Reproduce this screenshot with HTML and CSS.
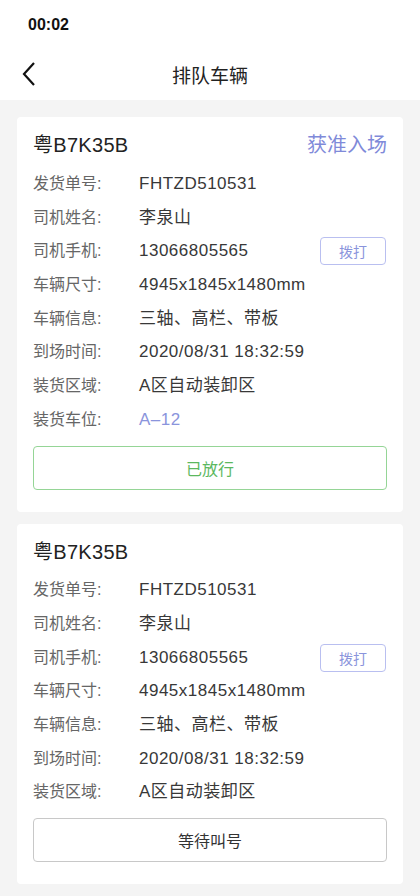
FILE: index.html
```html
<!DOCTYPE html>
<html lang="zh-CN">
  <head>
    <meta charset="UTF-8" />
    <meta name="viewport" content="width=device-width, initial-scale=1.0" />
    <title>排队车辆</title>
    <link rel="stylesheet" href="styles.css">
  </head>
  <body>
    <div class="wrapper">
      <div class="status-bar"><span class="time">00:02</span></div>
      <div class="nav-bar">
        <span class="back">
          <svg width="16" height="26" viewBox="0 0 16 26">
            <polyline points="13,2 3,13 13,24" fill="none" stroke="#111" stroke-width="2.2" />
          </svg>
        </span>
        <h1 class="title">排队车辆</h1>
      </div>

      <div class="list">
        <div class="card">
          <div class="card-head">
            <span class="plate">粤B7K35B</span>
            <span class="state">获准入场</span>
          </div>
          <div class="row"><span class="label">发货单号:</span><span class="value">FHTZD510531</span></div>
          <div class="row"><span class="label">司机姓名:</span><span class="value">李泉山</span></div>
          <div class="row">
            <span class="label">司机手机:</span><span class="value">13066805565</span>
            <button class="call">拨打</button>
          </div>
          <div class="row"><span class="label">车辆尺寸:</span><span class="value">4945x1845x1480mm</span></div>
          <div class="row"><span class="label">车辆信息:</span><span class="value">三轴、高栏、带板</span></div>
          <div class="row"><span class="label">到场时间:</span><span class="value">2020/08/31 18:32:59</span></div>
          <div class="row"><span class="label">装货区域:</span><span class="value">A区自动装卸区</span></div>
          <div class="row"><span class="label">装货车位:</span><span class="value value-link">A–12</span></div>
          <button class="action action-done">已放行</button>
        </div>

        <div class="card">
          <div class="card-head">
            <span class="plate">粤B7K35B</span>
          </div>
          <div class="row"><span class="label">发货单号:</span><span class="value">FHTZD510531</span></div>
          <div class="row"><span class="label">司机姓名:</span><span class="value">李泉山</span></div>
          <div class="row">
            <span class="label">司机手机:</span><span class="value">13066805565</span>
            <button class="call">拨打</button>
          </div>
          <div class="row"><span class="label">车辆尺寸:</span><span class="value">4945x1845x1480mm</span></div>
          <div class="row"><span class="label">车辆信息:</span><span class="value">三轴、高栏、带板</span></div>
          <div class="row"><span class="label">到场时间:</span><span class="value">2020/08/31 18:32:59</span></div>
          <div class="row"><span class="label">装货区域:</span><span class="value">A区自动装卸区</span></div>
          <button class="action action-wait">等待叫号</button>
        </div>
      </div>
    </div>
  </body>
</html>
```

FILE: styles.css
```css
* {
  margin: 0;
  padding: 0;
  box-sizing: border-box;
}
body {
  background-color: #f4f4f4;
}
.wrapper {
  display: flex;
  flex-direction: column;
  width: 420px;
  min-height: 896px;
  background-color: #f4f4f4;
  font-family: "Liberation Sans", "Noto Sans CJK SC", sans-serif;
  color: #333;
}
.status-bar {
  display: flex;
  align-items: center;
  height: 50px;
  padding-left: 28px;
  background-color: #fff;
}
.time {
  font-size: 16px;
  font-weight: bold;
  color: #111;
  line-height: 20px;
}
.nav-bar {
  position: relative;
  display: flex;
  align-items: center;
  justify-content: center;
  height: 50px;
  background-color: #fff;
}
.back {
  position: absolute;
  left: 21px;
  top: 11px;
  display: flex;
}
.title {
  font-size: 19px;
  font-weight: normal;
  color: #222;
  line-height: 26px;
  font-family: "Noto Sans CJK SC", sans-serif;
}
.list {
  display: flex;
  flex-direction: column;
  gap: 12px;
  padding: 17px 17px 13px;
}
.card {
  display: flex;
  flex-direction: column;
  background-color: #fff;
  border-radius: 4px;
  padding: 10px 16px 22px;
}
.card-head {
  display: flex;
  justify-content: space-between;
  align-items: center;
  height: 34px;
  margin-bottom: 5px;
  padding-top: 2px;
  font-size: 20px;
  line-height: 28px;
}
.plate {
  color: #222;
  letter-spacing: 0.3px;
}
.state {
  color: #7f8ad9;
}
.row {
  display: flex;
  align-items: center;
  height: 33.7px;
  padding-top: 2px;
  font-size: 16px;
  line-height: 24px;
}
.label {
  width: 106px;
  color: #666;
}
.value {
  flex: 1;
  color: #383838;
  font-size: 17px;
  letter-spacing: 0.5px;
}
.value-link {
  color: #8a94dc;
}
.call {
  width: 66px;
  height: 28px;
  border: 1px solid #b9bff0;
  border-radius: 4px;
  background-color: #fff;
  color: #8a94dc;
  font-size: 14px;
  font-family: "Noto Sans CJK SC", sans-serif;
  margin-right: 1px;
}
.action {
  height: 44px;
  margin-top: 10px;
  border-radius: 4px;
  background-color: #fff;
  font-size: 16px;
  font-family: "Noto Sans CJK SC", sans-serif;
}
.action-done {
  border: 1px solid #95d596;
  color: #5cb85f;
}
.action-wait {
  border: 1px solid #c8c8c8;
  color: #333;
}
```
